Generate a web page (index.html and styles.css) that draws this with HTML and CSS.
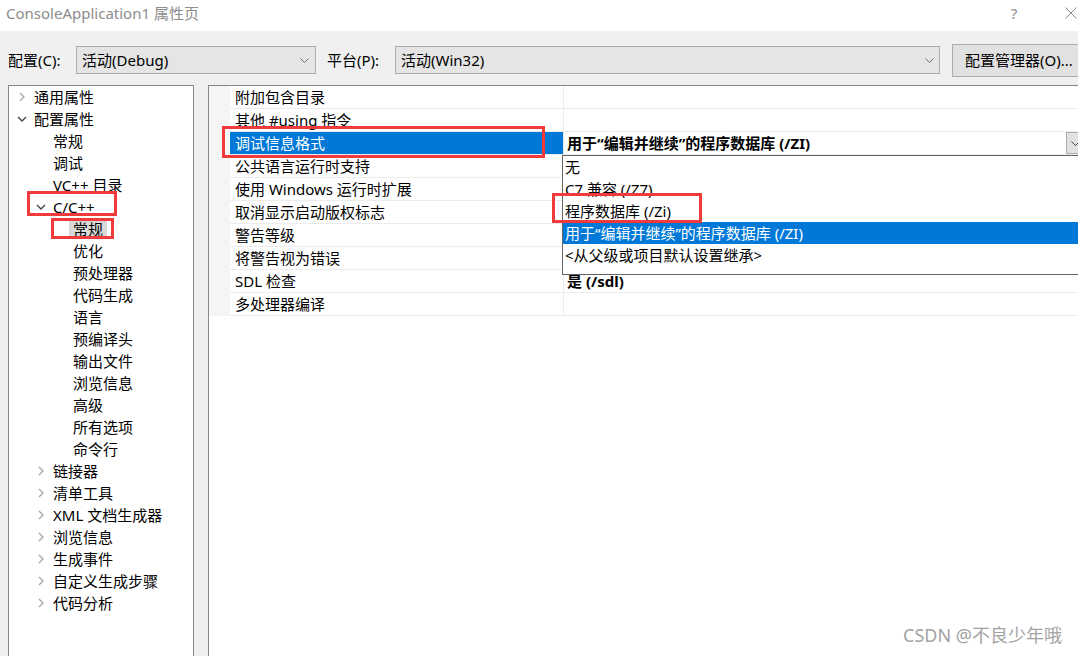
FILE: index.html
```html
<!DOCTYPE html>
<html lang="zh-CN">
<head>
<meta charset="utf-8">
<title>ConsoleApplication1 属性页</title>
<link rel="stylesheet" href="styles.css">
</head>
<body>
<div class="window">
  <div class="titlebar">
    <span class="title">ConsoleApplication1 属性页</span>
    <span class="help">?</span>
    <svg class="close" width="12" height="12" viewBox="0 0 12 12"><path d="M0.5 0.5 L11.5 11.5 M11.5 0.5 L0.5 11.5" stroke="#8a8a8a" stroke-width="1" fill="none"/></svg>
  </div>

  <div class="toolbar">
    <span class="label">配置(C):</span>
    <div class="combo combo-config">
      <span>活动(Debug)</span>
      <svg class="chev" width="9" height="5" viewBox="0 0 9 5"><path d="M0.5 0.5 L4.5 4.5 L8.5 0.5" stroke="#6d6d6d" stroke-width="1" fill="none"/></svg>
    </div>
    <span class="label label-platform">平台(P):</span>
    <div class="combo combo-platform">
      <span>活动(Win32)</span>
      <svg class="chev" width="9" height="5" viewBox="0 0 9 5"><path d="M0.5 0.5 L4.5 4.5 L8.5 0.5" stroke="#6d6d6d" stroke-width="1" fill="none"/></svg>
    </div>
    <div class="button">配置管理器(O)...</div>
  </div>

  <div class="main">
    <div class="tree">
      <div class="node l0"><span class="tw"><svg width="6" height="10" viewBox="0 0 6 10"><path d="M1 1 L5 5 L1 9" fill="none" stroke="#a6a6a6" stroke-width="1.3"/></svg></span><span class="tx">通用属性</span></div>
      <div class="node l0"><span class="tw"><svg width="10" height="6" viewBox="0 0 10 6"><path d="M1 1 L5 5 L9 1" fill="none" stroke="#404040" stroke-width="1.3"/></svg></span><span class="tx">配置属性</span></div>
      <div class="node l1"><span class="tw"></span><span class="tx">常规</span></div>
      <div class="node l1"><span class="tw"></span><span class="tx">调试</span></div>
      <div class="node l1"><span class="tw"></span><span class="tx">VC++ 目录</span></div>
      <div class="node l1"><span class="tw"><svg width="10" height="6" viewBox="0 0 10 6"><path d="M1 1 L5 5 L9 1" fill="none" stroke="#404040" stroke-width="1.3"/></svg></span><span class="tx">C/C++</span></div>
      <div class="node l2"><span class="tw"></span><span class="tx selected">常规</span></div>
      <div class="node l2"><span class="tw"></span><span class="tx">优化</span></div>
      <div class="node l2"><span class="tw"></span><span class="tx">预处理器</span></div>
      <div class="node l2"><span class="tw"></span><span class="tx">代码生成</span></div>
      <div class="node l2"><span class="tw"></span><span class="tx">语言</span></div>
      <div class="node l2"><span class="tw"></span><span class="tx">预编译头</span></div>
      <div class="node l2"><span class="tw"></span><span class="tx">输出文件</span></div>
      <div class="node l2"><span class="tw"></span><span class="tx">浏览信息</span></div>
      <div class="node l2"><span class="tw"></span><span class="tx">高级</span></div>
      <div class="node l2"><span class="tw"></span><span class="tx">所有选项</span></div>
      <div class="node l2"><span class="tw"></span><span class="tx">命令行</span></div>
      <div class="node l1"><span class="tw"><svg width="6" height="10" viewBox="0 0 6 10"><path d="M1 1 L5 5 L1 9" fill="none" stroke="#a6a6a6" stroke-width="1.3"/></svg></span><span class="tx">链接器</span></div>
      <div class="node l1"><span class="tw"><svg width="6" height="10" viewBox="0 0 6 10"><path d="M1 1 L5 5 L1 9" fill="none" stroke="#a6a6a6" stroke-width="1.3"/></svg></span><span class="tx">清单工具</span></div>
      <div class="node l1"><span class="tw"><svg width="6" height="10" viewBox="0 0 6 10"><path d="M1 1 L5 5 L1 9" fill="none" stroke="#a6a6a6" stroke-width="1.3"/></svg></span><span class="tx">XML 文档生成器</span></div>
      <div class="node l1"><span class="tw"><svg width="6" height="10" viewBox="0 0 6 10"><path d="M1 1 L5 5 L1 9" fill="none" stroke="#a6a6a6" stroke-width="1.3"/></svg></span><span class="tx">浏览信息</span></div>
      <div class="node l1"><span class="tw"><svg width="6" height="10" viewBox="0 0 6 10"><path d="M1 1 L5 5 L1 9" fill="none" stroke="#a6a6a6" stroke-width="1.3"/></svg></span><span class="tx">生成事件</span></div>
      <div class="node l1"><span class="tw"><svg width="6" height="10" viewBox="0 0 6 10"><path d="M1 1 L5 5 L1 9" fill="none" stroke="#a6a6a6" stroke-width="1.3"/></svg></span><span class="tx">自定义生成步骤</span></div>
      <div class="node l1"><span class="tw"><svg width="6" height="10" viewBox="0 0 6 10"><path d="M1 1 L5 5 L1 9" fill="none" stroke="#a6a6a6" stroke-width="1.3"/></svg></span><span class="tx">代码分析</span></div>
    </div>

    <div class="props">
      <div class="grid">
        <div class="row"><div class="gutter"></div><div class="name">附加包含目录</div><div class="value"></div></div>
        <div class="row"><div class="gutter"></div><div class="name">其他 #using 指令</div><div class="value"></div></div>
        <div class="row"><div class="gutter"></div><div class="name active">调试信息格式</div><div class="value"><b>用于“编辑并继续”的程序数据库 (/ZI)</b><span class="dd-btn"><svg width="9" height="5" viewBox="0 0 9 5"><path d="M0.5 0.5 L4.5 4.5 L8.5 0.5" stroke="#444" stroke-width="1" fill="none"/></svg></span></div></div>
        <div class="row"><div class="gutter"></div><div class="name">公共语言运行时支持</div><div class="value"></div></div>
        <div class="row"><div class="gutter"></div><div class="name">使用 Windows 运行时扩展</div><div class="value"></div></div>
        <div class="row"><div class="gutter"></div><div class="name">取消显示启动版权标志</div><div class="value"></div></div>
        <div class="row"><div class="gutter"></div><div class="name">警告等级</div><div class="value"></div></div>
        <div class="row"><div class="gutter"></div><div class="name">将警告视为错误</div><div class="value"></div></div>
        <div class="row"><div class="gutter"></div><div class="name">SDL 检查</div><div class="value"><b>是 (/sdl)</b></div></div>
        <div class="row"><div class="gutter"></div><div class="name">多处理器编译</div><div class="value"></div></div>
      </div>

      <div class="dropdown">
        <div class="opt">无</div>
        <div class="opt">C7 兼容 (/Z7)</div>
        <div class="opt">程序数据库 (/Zi)</div>
        <div class="opt sel">用于“编辑并继续”的程序数据库 (/ZI)</div>
        <div class="opt">&lt;从父级或项目默认设置继承&gt;</div>
      </div>
    </div>
  </div>

  <div class="mark mark-debug"></div>
  <div class="mark mark-cpp"></div>
  <div class="mark mark-general"></div>
  <div class="mark mark-zi"></div>

  <div class="watermark">CSDN @不良少年哦</div>
</div>
</body>
</html>
```

FILE: styles.css
```css
* { box-sizing: border-box; }

html, body { margin: 0; padding: 0; }

body {
  width: 1078px;
  height: 656px;
  overflow: hidden;
  background: #f0f0f0;
  font-family: "Noto Sans", "Noto Sans CJK SC", sans-serif;
  font-size: 15px;
  color: #000;
}

.window {
  position: relative;
  width: 1078px;
  height: 656px;
  overflow: hidden;
  background: #f0f0f0;
}

/* title bar */
.titlebar {
  height: 31px;
  background: #fff;
  display: flex;
  align-items: center;
  padding: 0 1px 5px 6px;
  color: #8c8c8c;
}
.title { font-size: 15px; line-height: 20px; white-space: nowrap; }
.help { margin-left: auto; width: 20px; text-align: center; font-size: 15px; line-height: 20px; }
.close { margin-left: 41px; flex: none; }

/* toolbar */
.toolbar {
  height: 54px;
  display: flex;
  align-items: center;
  padding: 4px 0 0 8px;
  white-space: nowrap;
}
.label { width: 68px; flex: none; line-height: 20px; }
.label-platform { margin-left: 11px; }
.combo {
  flex: none;
  height: 28px;
  border: 1px solid #adadad;
  background: #e5e5e5;
  display: flex;
  align-items: center;
  padding: 0 6px 0 5px;
  line-height: 20px;
}
.combo-config { width: 240px; }
.combo-platform { width: 545px; padding-right: 5px; }
.combo .chev { margin-left: auto; }
.button {
  flex: none;
  margin-left: 12px;
  height: 33px;
  width: 140px;
  border: 1px solid #adadad;
  background: #e1e1e1;
  display: flex;
  align-items: center;
  padding-left: 12px;
  line-height: 20px;
}

/* main area */
.main {
  display: flex;
  gap: 14px;
  padding-left: 8px;
  height: 571px;
}

.tree {
  width: 186px;
  flex: none;
  height: 600px;
  background: #fff;
  border: 1px solid #828790;
}
.node {
  height: 22px;
  display: flex;
  align-items: center;
  white-space: nowrap;
  line-height: 20px;
}
.node.l0 { padding-left: 5px; }
.node.l1 { padding-left: 24px; }
.node.l2 { padding-left: 44px; }
.tw {
  width: 16px;
  margin-right: 4px;
  flex: none;
  display: flex;
  align-items: center;
  justify-content: center;
}
.tx.selected {
  background: #d9d9d9;
  padding: 0 4px;
  margin-left: -4px;
  line-height: 17px;
}

/* property grid */
.props {
  position: relative;
  width: 880px;
  height: 600px;
  flex: none;
  background: #fff;
  border: 1px solid #828790;
}
.row {
  display: flex;
  height: 23px;
}
.gutter {
  width: 21px;
  flex: none;
  background: #f5f5f5;
}
.name {
  width: 334px;
  flex: none;
  border-right: 1px solid #ececec;
  border-bottom: 1px solid #ececec;
  padding-left: 5px;
  line-height: 22px;
  white-space: nowrap;
}
.name.active {
  background: #0078d7;
  color: #fff;
}
.value {
  flex: 1;
  border-bottom: 1px solid #ececec;
  padding-left: 3px;
  display: flex;
  align-items: center;
  white-space: nowrap;
  line-height: 22px;
}
.value b { font-weight: 700; }
.dd-btn {
  margin-left: auto;
  margin-right: 3px;
  width: 18px;
  height: 22px;
  background: #e1e1e1;
  border: 1px solid #adadad;
  display: flex;
  align-items: center;
  justify-content: center;
}

.dropdown {
  position: absolute;
  left: 353px;
  top: 69px;
  width: 600px;
  height: 120px;
  border: 1px solid #646464;
  background: #fff;
}
.opt {
  height: 22px;
  line-height: 22px;
  padding-left: 2px;
  white-space: nowrap;
}
.opt.sel {
  background: #0078d7;
  color: #fff;
}

/* annotation boxes */
.mark {
  position: absolute;
  border: 3px solid #ef3b3b;
}
.mark-debug { left: 222px; top: 126px; width: 323px; height: 32px; }
.mark-cpp { left: 27px; top: 191px; width: 90px; height: 25px; }
.mark-general { left: 51px; top: 218px; width: 63px; height: 21px; }
.mark-zi { left: 552px; top: 193px; width: 150px; height: 30px; }

.watermark {
  position: absolute;
  right: 16px;
  top: 624px;
  font-size: 18px;
  line-height: 22px;
  color: #a3a3a3;
  white-space: nowrap;
}
```
